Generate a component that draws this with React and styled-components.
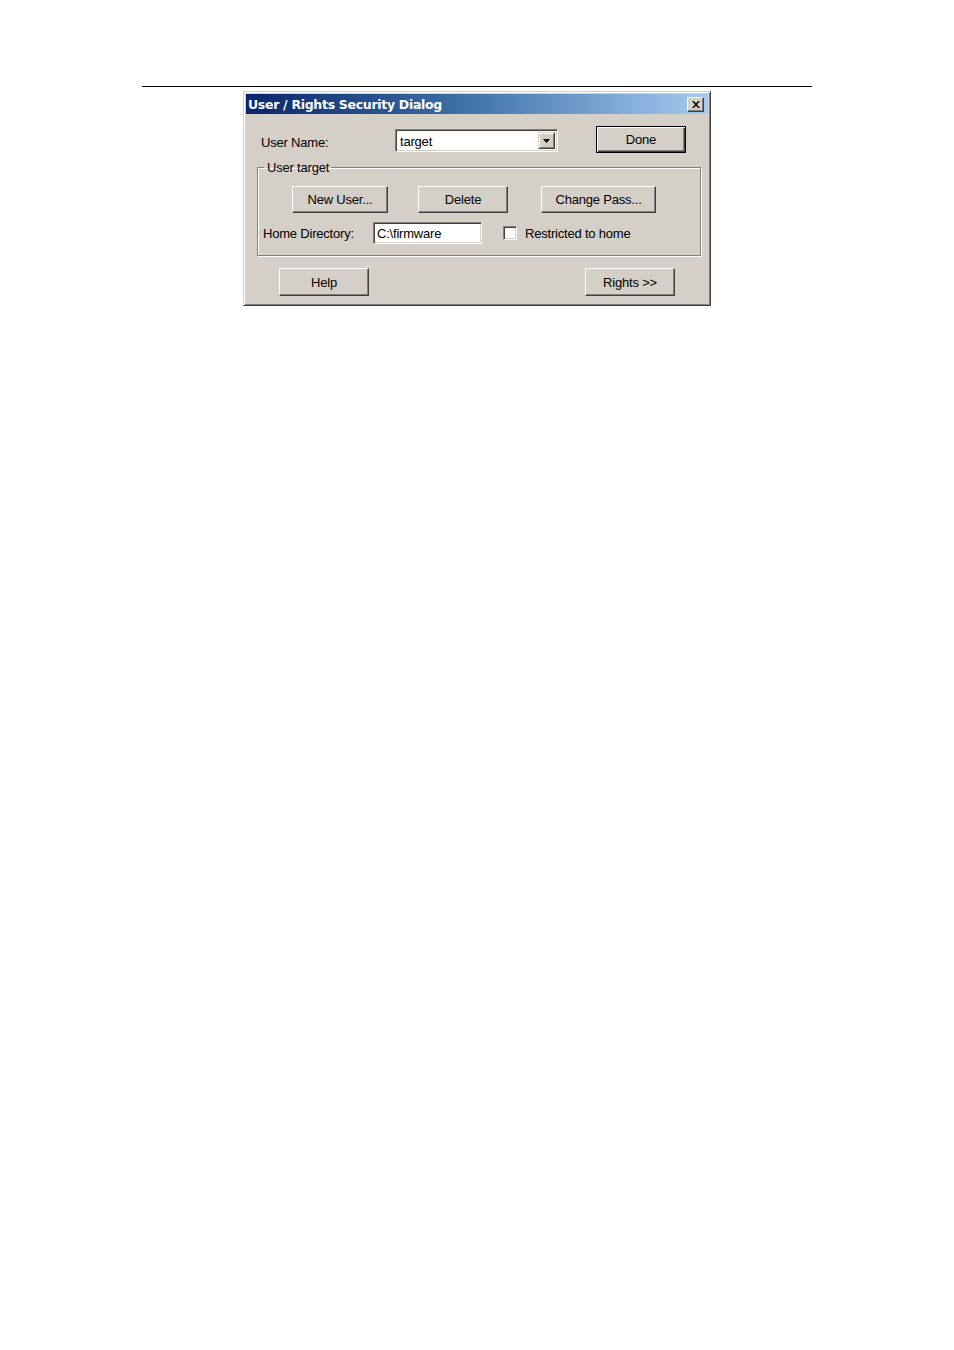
import React from "react";
import styled, { createGlobalStyle } from "styled-components";

const Global = createGlobalStyle`
  html, body { margin: 0; padding: 0; background: #ffffff; }
  body { font-family: "Liberation Sans", Arial, sans-serif; }
`;

const Page = styled.div`
  width: 954px;
  height: 1350px;
  padding-top: 86px;
  box-sizing: border-box;
`;

const Rule = styled.div`
  margin-left: 142px;
  width: 670px;
  height: 1px;
  background: #000;
`;

const Dialog = styled.div`
  margin-top: 4px;
  margin-left: 243px;
  width: 468px;
  height: 215px;
  box-sizing: border-box;
  background: #d4d0c8;
  border: 1px solid;
  border-color: #d4d0c8 #404040 #404040 #d4d0c8;
  box-shadow: inset 1px 1px 0 #ffffff, inset -1px -1px 0 #808080;
  padding: 2px;
  display: flex;
  flex-direction: column;
  font-size: 13px;
  color: #000;
  letter-spacing: -0.2px;
`;

const TitleBar = styled.div`
  height: 20px;
  flex: none;
  background: linear-gradient(to right, #0a246a 0%, #3a6ea5 45%, #a6caf0 100%);
  display: flex;
  align-items: center;
  justify-content: space-between;
  padding: 0 4px 0 2px;
`;

const Title = styled.span`
  color: #fff;
  font-family: "DejaVu Sans", Verdana, sans-serif;
  font-weight: bold;
  font-size: 12.5px;
  letter-spacing: -0.3px;
`;

const CloseBtn = styled.div`
  width: 17px;
  height: 15px;
  box-sizing: border-box;
  background: #d4d0c8;
  border: 1px solid;
  border-color: #ffffff #404040 #404040 #ffffff;
  box-shadow: inset -1px -1px 0 #808080;
  display: flex;
  align-items: center;
  justify-content: center;
`;

const Content = styled.div`
  flex: 1;
  display: flex;
  flex-direction: column;
`;

const TopRow = styled.div`
  margin-top: 12px;
  padding-left: 15px;
  display: flex;
  align-items: center;
  height: 27px;
`;

const Label = styled.span`
  width: ${(p) => p.$w}px;
  margin-top: ${(p) => p.$mt || 0}px;
  flex: none;
  white-space: nowrap;
`;

const Combo = styled.div`
  width: 163px;
  height: 23px;
  box-sizing: border-box;
  background: #fff;
  border: 1px solid;
  border-color: #808080 #ffffff #ffffff #808080;
  box-shadow: inset 1px 1px 0 #404040, inset -1px -1px 0 #d4d0c8;
  display: flex;
  align-items: center;
  padding: 2px 2px 2px 4px;
  margin-top: 2px;
`;

const ComboText = styled.span`
  flex: 1;
  padding-top: 1px;
`;

const ArrowBtn = styled.div`
  width: 17px;
  height: 17px;
  box-sizing: border-box;
  background: #d4d0c8;
  border: 1px solid;
  border-color: #d4d0c8 #404040 #404040 #d4d0c8;
  box-shadow: inset 1px 1px 0 #ffffff, inset -1px -1px 0 #808080;
  display: flex;
  align-items: center;
  justify-content: center;
`;

const Button = styled.div`
  width: ${(p) => p.$w}px;
  height: ${(p) => p.$h || 27}px;
  margin-left: ${(p) => p.$ml || 0}px;
  flex: none;
  box-sizing: border-box;
  background: #d4d0c8;
  border: 1px solid;
  border-color: #ffffff #404040 #404040 #ffffff;
  box-shadow: inset -1px -1px 0 #808080;
  display: flex;
  align-items: center;
  justify-content: center;
  white-space: nowrap;
  ${(p) =>
    p.$default &&
    `
    border: 1px solid #000;
    box-shadow: inset 1px 1px 0 #ffffff, inset -1px -1px 0 #404040, inset -2px -2px 0 #808080;
  `}
`;

const Group = styled.fieldset`
  margin: 7px 0 0 11px;
  width: 444px;
  height: 96px;
  box-sizing: border-box;
  padding: 0;
  border: 1px solid #808080;
  box-shadow: inset 1px 1px 0 #ffffff, 1px 1px 0 #ffffff;
`;

const Legend = styled.legend`
  margin-left: 6px;
  padding: 0 2px 0 3px;
  line-height: 15px;
`;

const GroupRow = styled.div`
  display: flex;
  align-items: center;
  padding-left: ${(p) => p.$pl}px;
  margin-top: ${(p) => p.$mt}px;
  height: ${(p) => p.$h}px;
`;

const Edit = styled.div`
  width: 109px;
  height: 22px;
  box-sizing: border-box;
  background: #fff;
  border: 1px solid;
  border-color: #808080 #ffffff #ffffff #808080;
  box-shadow: inset 1px 1px 0 #404040, inset -1px -1px 0 #d4d0c8;
  display: flex;
  align-items: center;
  padding-left: 3px;
  padding-top: 1px;
  flex: none;
`;

const Check = styled.div`
  width: 14px;
  height: 14px;
  box-sizing: border-box;
  margin-left: 21px;
  margin-right: 8px;
  background: #fff;
  border: 1px solid;
  border-color: #808080 #ffffff #ffffff #808080;
  box-shadow: inset 1px 1px 0 #404040, inset -1px -1px 0 #d4d0c8;
  flex: none;
`;

const BottomRow = styled.div`
  margin-top: 12px;
  padding-left: 33px;
  display: flex;
  align-items: center;
`;

export default function App() {
  return (
    <>
      <Global />
      <Page>
        <Rule />
        <Dialog>
          <TitleBar>
            <Title>User / Rights Security Dialog</Title>
            <CloseBtn>
              <svg width="8" height="7" viewBox="0 0 8 7">
                <path d="M0 0h2l2 2.5L6 0h2L5 3.5 8 7H6L4 4.5 2 7H0l3-3.5z" fill="#000" />
              </svg>
            </CloseBtn>
          </TitleBar>
          <Content>
            <TopRow>
              <Label $w={134} $mt={6}>User Name:</Label>
              <Combo>
                <ComboText>target</ComboText>
                <ArrowBtn>
                  <svg width="7" height="4" viewBox="0 0 7 4">
                    <path d="M0 0h7L3.5 4z" fill="#000" />
                  </svg>
                </ArrowBtn>
              </Combo>
              <Button $w={90} $ml={38} $default>Done</Button>
            </TopRow>
            <Group>
              <Legend>User target</Legend>
              <GroupRow $pl={34} $mt={11} $h={27}>
                <Button $w={96}>New User...</Button>
                <Button $w={90} $ml={30}>Delete</Button>
                <Button $w={115} $ml={33}>Change Pass...</Button>
              </GroupRow>
              <GroupRow $pl={5} $mt={9} $h={22}>
                <Label $w={110}>Home Directory:</Label>
                <Edit>C:\firmware</Edit>
                <Check />
                <span>Restricted to home</span>
              </GroupRow>
            </Group>
            <BottomRow>
              <Button $w={90} $h={28}>Help</Button>
              <Button $w={90} $h={28} $ml={216}>Rights &gt;&gt;</Button>
            </BottomRow>
          </Content>
        </Dialog>
      </Page>
    </>
  );
}
